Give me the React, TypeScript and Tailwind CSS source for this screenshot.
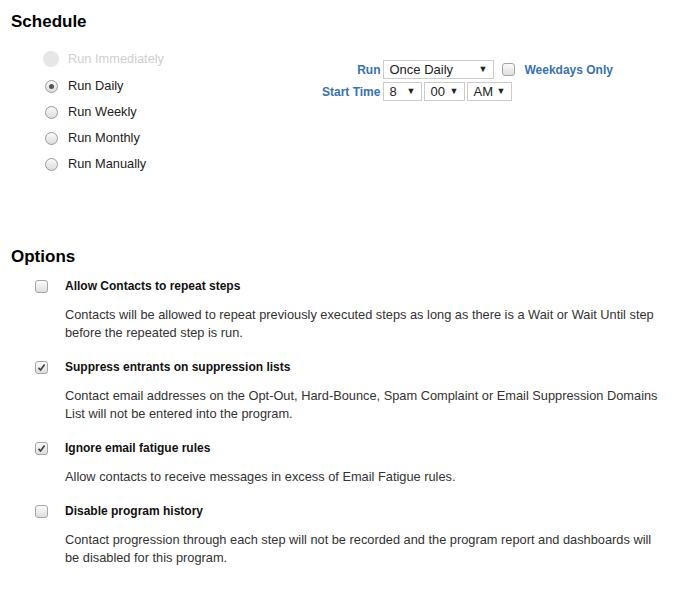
import React from "react";

function Radio({ checked, disabled }: { checked?: boolean; disabled?: boolean }) {
  if (disabled) {
    return <span className="w-4 h-4 rounded-full bg-[#e6e6e6] inline-block" />;
  }
  return (
    <span className="w-[13px] h-[13px] rounded-full border border-[#9a9a9a] bg-gradient-to-b from-[#fafafa] to-[#dcdcdc] inline-flex items-center justify-center">
      {checked && <span className="w-[5px] h-[5px] rounded-full bg-[#555]" />}
    </span>
  );
}

function Checkbox({ checked }: { checked?: boolean }) {
  return (
    <span className="w-[13px] h-[13px] rounded-[3px] border border-[#a6a6a6] bg-gradient-to-b from-[#fbfbfb] to-[#dedede] inline-flex items-center justify-center">
      {checked && (
        <svg width="9" height="9" viewBox="0 0 9 9">
          <path d="M1.5 4.8 L3.6 7 L7.6 1.6" stroke="#444" strokeWidth="1.7" fill="none" />
        </svg>
      )}
    </span>
  );
}

function Select({ value, width }: { value: string; width: string }) {
  return (
    <div className={`${width} h-[19px] border border-[#cccccc] bg-white flex items-center justify-between pl-[5px] pr-[6px] text-[13px] font-normal text-[#222]`}>
      <span>{value}</span>
      <span className="text-[9px] leading-none">▼</span>
    </div>
  );
}

export default function App() {
  const runs = [
    { name: "Run Immediately", disabled: true },
    { name: "Run Daily", checked: true },
    { name: "Run Weekly" },
    { name: "Run Monthly" },
    { name: "Run Manually" },
  ];

  const options = [
    {
      title: "Allow Contacts to repeat steps",
      checked: false,
      desc: "Contacts will be allowed to repeat previously executed steps as long as there is a Wait or Wait Until step before the repeated step is run.",
    },
    {
      title: "Suppress entrants on suppression lists",
      checked: true,
      desc: "Contact email addresses on the Opt-Out, Hard-Bounce, Spam Complaint or Email Suppression Domains List will not be entered into the program.",
    },
    {
      title: "Ignore email fatigue rules",
      checked: true,
      desc: "Allow contacts to receive messages in excess of Email Fatigue rules.",
    },
    {
      title: "Disable program history",
      checked: false,
      desc: "Contact progression through each step will not be recorded and the program report and dashboards will be disabled for this program.",
    },
  ];

  return (
    <div className="w-[693px] h-[593px] bg-white text-[#333] font-['Liberation_Sans',Arial,sans-serif] pl-[11px] pt-[12px] overflow-hidden">
      {/* Schedule */}
      <h2 className="text-[17px] font-bold text-black leading-[20px]">Schedule</h2>
      <div className="flex mt-[14px]">
        <div className="w-[311px] pl-[26px] flex flex-col">
          {runs.map((r, i) => (
            <div key={r.name} className={`flex items-center h-[26px] ${i === 0 ? "mb-[1px]" : ""}`}>
              <span className={`w-[31px] flex ${r.disabled ? "pl-[6px]" : "pl-[8px]"}`}>
                <Radio checked={r.checked} disabled={r.disabled} />
              </span>
              <span className={`text-[12.8px] ${r.disabled ? "text-[#cfcfcf]" : "text-[#222]"}`}>{r.name}</span>
            </div>
          ))}
        </div>
        <div className="grid grid-cols-[auto_auto] gap-x-[3px] gap-y-[3px] items-center self-start mt-[14px] text-[12px] font-bold text-[#3872ae]">
          <span className="text-right">Run</span>
          <div className="flex items-center">
            <Select value="Once Daily" width="w-[111px]" />
            <span className="ml-[8px] mr-[9px] flex"><Checkbox /></span>
            <span>Weekdays Only</span>
          </div>
          <span className="text-right">Start Time</span>
          <div className="flex gap-[2px]">
            <Select value="8" width="w-[39px]" />
            <Select value="00" width="w-[41px]" />
            <Select value="AM" width="w-[45px]" />
          </div>
        </div>
      </div>

      {/* Options */}
      <h2 className="text-[17px] font-bold text-black leading-[20px] mt-[70px]">Options</h2>
      <div className="mt-[10px] pl-[24px] flex flex-col">
        {options.map((o) => (
          <div key={o.title} className="flex mb-[16px]">
            <span className="w-[30px] flex pt-[3px]">
              <Checkbox checked={o.checked} />
            </span>
            <div className="w-[600px]">
              <div className="text-[12px] font-bold text-[#111] leading-[18px]">{o.title}</div>
              <p className="text-[12.8px] leading-[18px] mt-[11px] text-[#333]">{o.desc}</p>
            </div>
          </div>
        ))}
      </div>
    </div>
  );
}
